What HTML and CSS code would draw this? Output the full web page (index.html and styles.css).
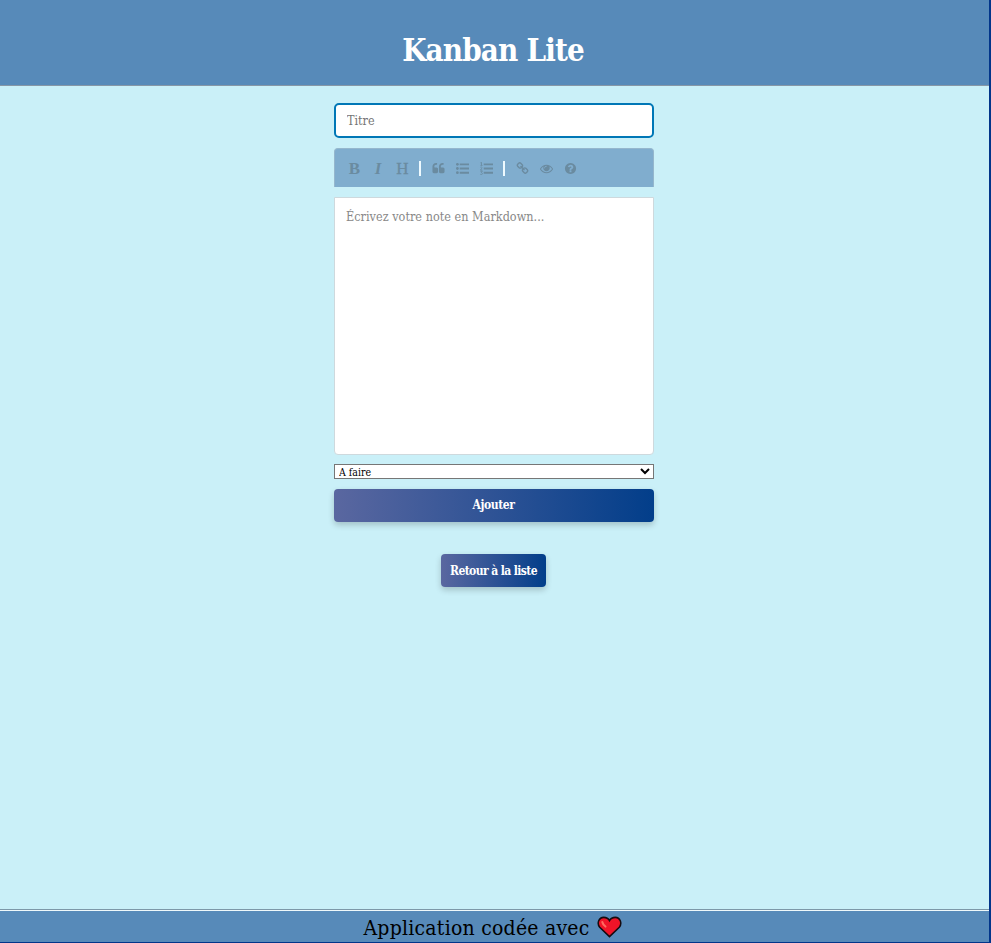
FILE: index.html
```html
<!DOCTYPE html>
<html lang="fr">
<head>
<meta charset="utf-8">
<title>Kanban Lite</title>
<link rel="stylesheet" href="styles.css">
</head>
<body>
<header class="header"><h1 class="title">Kanban Lite</h1></header>
<main class="main">
  <form class="form">
    <input class="field" type="text" placeholder="Titre">
    <div class="toolbar">
      <span class="tool bold">B</span>
      <span class="tool italic">I</span>
      <span class="tool heading">H</span>
      <i class="separator"></i>
      <span class="tool"><svg viewBox="0 0 1792 1792"><path d="M832 960v384q0 80-56 136t-136 56h-384q-80 0-136-56t-56-136v-704q0-104 40.500-198.500t109.500-163.500 163.500-109.500 198.500-40.500h64q26 0 45 19t19 45v128q0 26-19 45t-45 19h-64q-106 0-181 75t-75 181v32q0 40 28 68t68 28h224q80 0 136 56t56 136zm896 0v384q0 80-56 136t-136 56h-384q-80 0-136-56t-56-136v-704q0-104 40.500-198.500t109.500-163.500 163.500-109.500 198.500-40.500h64q26 0 45 19t19 45v128q0 26-19 45t-45 19h-64q-106 0-181 75t-75 181v32q0 40 28 68t68 28h224q80 0 136 56t56 136z"/></svg></span>
      <span class="tool"><svg viewBox="0 0 14 14"><circle cx="1.500" cy="2.500" r="1.500"/><circle cx="1.500" cy="7" r="1.500"/><circle cx="1.500" cy="11.500" r="1.500"/><path d="M4 1.500H14v2.100H4zM4 6H14v2.100H4zM4 10.500H14v2.100H4z"/></svg></span>
      <span class="tool"><svg viewBox="0 0 14 14"><path d="M4 1.500H14v2.100H4zM4 6H14v2.100H4zM4 10.500H14v2.100H4z"/><path class="digits" d="M.5.900 1.600.3v3.300M.5 3.700h2.200M.4 5.700c.8-.8 2.300-.2 1.600.9L.5 8.700h2.200M.4 10h2.100L1.400 11.400c1.600 0 1.500 2.200-.1 2.200L.3 13.200"/></svg></span>
      <i class="separator"></i>
      <span class="tool"><svg viewBox="0 0 1792 1792"><path d="M1520 1216q0-40-28-68l-208-208q-28-28-68-28-42 0-72 32 3 3 19 18.500t21.500 21.500 15 19 13 25.500 3.500 27.500q0 40-28 68t-68 28q-15 0-27.500-3.500t-25.500-13-19-15-21.500-21.500-18.500-19q-33 31-33 73 0 40 28 68l206 207q27 27 68 27 40 0 68-26l147-146q28-28 28-67zm-703-705q0-40-28-68l-206-207q-28-28-68-28-39 0-68 27l-147 146q-28 28-28 67 0 40 28 68l208 208q27 27 68 27 42 0 72-31-3-3-19-18.500t-21.500-21.500-15-19-13-25.500-3.500-27.500q0-40 28-68t68-28q15 0 27.500 3.500t25.500 13 19 15 21.500 21.500 18.500 19q33-31 33-73zm895 705q0 120-85 203l-147 146q-83 83-203 83-121 0-204-85l-206-207q-83-83-83-203 0-123 88-209l-88-88q-86 88-208 88-120 0-204-84l-208-208q-84-84-84-204t85-203l147-146q83-83 203-83 121 0 204 85l206 207q83 83 83 203 0 123-88 209l88 88q86-88 208-88 120 0 204 84l208 208q84 84 84 204z"/></svg></span>
      <span class="tool"><svg viewBox="0 0 1792 1792"><path d="M1664 960q-152-236-381-353 61 104 61 225 0 185-131.500 316.500t-316.500 131.500-316.500-131.500-131.500-316.500q0-121 61-225-229 117-381 353 133 205 333.500 326.500t434.500 121.500 434.500-121.500 333.500-326.500zm-720-384q0-20-14-34t-34-14q-125 0-214.500 89.500t-89.500 214.500q0 20 14 34t34 14 34-14 14-34q0-86 61-147t147-61q20 0 34-14t14-34zm848 384q0 34-20 69-140 230-376.500 368.500t-499.500 138.500-499.500-139-376.500-368q-20-35-20-69t20-69q140-229 376.500-368t499.500-139 499.500 139 376.500 368q20 35 20 69z"/></svg></span>
      <span class="tool"><svg viewBox="0 0 1792 1792"><path d="M1024 1376v-192q0-14-9-23t-23-9h-192q-14 0-23 9t-9 23v192q0 14 9 23t23 9h192q14 0 23-9t9-23zm256-672q0-88-55.500-163t-138.500-116-170-41q-243 0-371 213-15 24 8 42l132 100q7 6 19 6 16 0 25-12 53-68 86-92 34-24 86-24 48 0 85.500 26t37.500 59q0 38-20 61t-68 45q-63 28-115.500 86.500t-52.500 125.500v36q0 14 9 23t23 9h192q14 0 23-9t9-23q0-19 21.500-49.500t54.500-49.500q32-18 49-28.500t46-35 44.500-48 28-60.500 12.500-81zm384 192q0 209-103 385.500t-279.500 279.500-385.500 103-385.500-103-279.500-279.500-103-385.500 103-385.500 279.500-279.500 385.500-103 385.500 103 279.500 279.500 103 385.500z"/></svg></span>
    </div>
    <textarea class="note" placeholder="Écrivez votre note en Markdown..."></textarea>
    <select class="status"><option>A faire</option></select>
    <button class="button" type="button"><span class="add-label">Ajouter</span></button>
  </form>
  <a class="button back"><span class="back-label">Retour à la liste</span></a>
</main>
<footer class="footer">
  <span class="credit">Application codée avec</span>
  <svg class="heart" viewBox="0 0 26 24"><path class="heart-shape" d="M13 22 2.800 12.300C-.5 8 2 2 7 2c2.600 0 4.800 1.200 6 3.400C14.200 3.200 16.400 2 19 2c5 0 7.500 6 4.200 10.300Z"/><path class="heart-shine" d="M5.500 6.800c.4 1.800 1.600 3.400 3.300 4.700"/></svg>
</footer>
</body>
</html>
```
FILE: styles.css
```css
* { box-sizing: border-box; }
html { height: 100%; background: #02358a; }
body {
  display: flex;
  flex-direction: column;
  width: 989px;
  height: 942px;
  margin: 0;
  background: #caf0f8;
  font-family: "DejaVu Serif Condensed", "DejaVu Serif", serif;
  font-stretch: condensed;
}
.header {
  height: 86px;
  padding-top: 29px;
  background: #578ab9;
  border-bottom: 1px solid #8797a6;
  text-align: center;
}
.title {
  margin: 0;
  padding-right: 3px;
  color: #fff;
  font-size: 31px;
  line-height: 42px;
  letter-spacing: -.85px;
}
.main {
  flex: 1;
  display: flex;
  flex-direction: column;
  align-items: center;
  padding-top: 17px;
}
.form {
  display: flex;
  flex-direction: column;
  width: 320px;
  margin-right: 1px;
}
.field, .note, .status { font-family: inherit; font-stretch: condensed; }
.field {
  height: 35px;
  padding: 0 11px;
  background: #fff;
  border: 2px solid #0077b6;
  border-radius: 5px;
  font-size: 12.5px;
  outline: none;
}
.field::placeholder { color: #757575; }
.toolbar {
  display: flex;
  align-items: center;
  height: 39px;
  margin-top: 10px;
  padding: 1px 8px 0 7px;
  background: #80adce;
  border: 1px solid #95b7cd;
  border-bottom: 0;
  border-radius: 4px 4px 0 0;
}
.tool {
  display: flex;
  align-items: center;
  justify-content: center;
  width: 24px;
  height: 24px;
  color: #6a8ba0;
  font: 17px "Liberation Serif", serif;
}
.tool svg { width: 13px; height: 13px; fill: currentColor; }
.tool .digits { fill: none; stroke: currentColor; stroke-width: .9; }
.bold { padding-left: 1px; font-weight: bold; }
.italic { font-weight: bold; font-style: italic; }
.heading { padding-left: 1px; font-size: 17px; -webkit-text-stroke: .3px currentColor; }
.separator { width: 2px; height: 15px; margin: 0 5px; background: #eefaff; }
.note {
  height: 258px;
  margin-top: 10px;
  padding: 10px 11px;
  background: #fff;
  border: 1px solid #ced9dd;
  border-radius: 0 0 4px 4px;
  font-size: 12.5px;
  line-height: 17px;
  letter-spacing: .03px;
  resize: none;
}
.note::placeholder { color: #888; }
.status {
  height: 15px;
  margin-top: 9px;
  padding: 0;
  background-color: #fff;
  border: 1px solid #767676;
  border-radius: 0;
  color: #000;
  font-size: 10.5px;
}
.button {
  display: flex;
  align-items: center;
  justify-content: center;
  height: 33px;
  margin-top: 10px;
  padding: 0 1px 1px 0;
  background: linear-gradient(to right, #5a67a0, #023e8a);
  border: 0;
  border-radius: 4px;
  box-shadow: 0 3px 6px rgba(0, 0, 0, .2);
  color: #fff;
  font-family: inherit;
  font-size: 12px;
  font-stretch: condensed;
  font-weight: bold;
  white-space: nowrap;
}
.add-label { letter-spacing: -.4px; }
.back { width: 105px; margin-top: 32px; margin-right: 2px; padding: 0; }
.back-label { letter-spacing: -.6px; }
.footer {
  display: flex;
  justify-content: center;
  gap: 7px;
  height: 33px;
  padding: 1px 4px 0 0;
  background: #578ab9;
  border-top: 1px solid #7d98a8;
  box-shadow: inset 0 1px #eef8fb;
  color: #000;
}
.credit { font-size: 21px; line-height: 34px; letter-spacing: .23px; }
.heart { width: 25px; height: 24px; margin-top: 4px; }
.heart-shape { fill: #f01428; stroke: #160b10; stroke-width: 1.600; }
.heart-shine { fill: none; stroke: #ff6a60; stroke-width: 2.200; stroke-linecap: round; }
```
